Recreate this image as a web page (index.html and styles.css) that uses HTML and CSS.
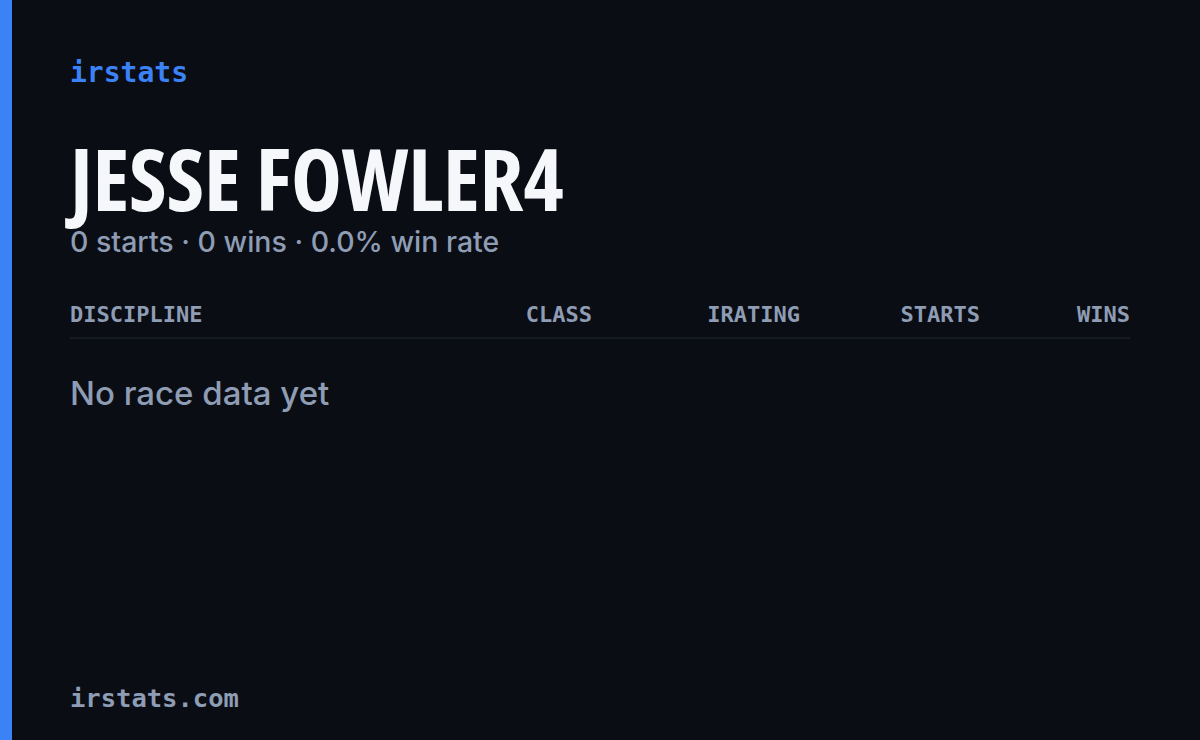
FILE: index.html
```html
<!DOCTYPE html>
<html>
<head>
<meta charset="utf-8">
<link rel="stylesheet" href="styles.css">
</head>
<body>
<div class="card">
  <div class="accent"></div>
  <main class="content">
    <div class="logo">irstats</div>
    <h1 class="name">JESSE FOWLER4</h1>
    <div class="summary">0 starts · 0 wins · 0.0% win rate</div>
    <div class="table-head">
      <span class="col col-disc">DISCIPLINE</span>
      <span class="col col-num">CLASS</span>
      <span class="col col-num">IRATING</span>
      <span class="col col-num">STARTS</span>
      <span class="col col-num">WINS</span>
    </div>
    <div class="empty">No race data yet</div>
    <div class="footer">irstats.com</div>
  </main>
</div>
</body>
</html>
```
FILE: styles.css
```css
html, body {
  margin: 0;
  padding: 0;
  background: #0a0d14;
}
.card {
  width: 1200px;
  height: 740px;
  display: flex;
  background: #0a0d14;
  overflow: hidden;
}
.accent {
  width: 12px;
  flex: none;
  background: #3b82f6;
}
.content {
  flex: 1;
  display: flex;
  flex-direction: column;
  padding: 56px 70px 26px 58px;
}
.logo {
  font-family: "DejaVu Sans Mono", "Liberation Mono", monospace;
  font-size: 28px;
  line-height: 34px;
  color: #3b82f6;
  font-weight: bold;
}
.name {
  margin: 45px 0 0;
  font-family: "Open Sans", "Liberation Sans", sans-serif;
  font-stretch: 75%;
  font-style: normal;
  font-weight: 700;
  font-size: 86px;
  line-height: 86px;
  color: #f5f7fa;
  letter-spacing: -0.2px;
}
.summary {
  margin-top: 6px;
  font-family: Inter, "Noto Sans", sans-serif;
  font-size: 28.5px;
  font-weight: 500;
  line-height: 30px;
  color: #8e9cb4;
}
.table-head {
  margin-top: 44px;
  display: grid;
  grid-template-columns: 1fr 140px 208px 180px 150px;
  padding-bottom: 8px;
  border-bottom: 2px solid #161a24;
  font-family: "DejaVu Sans Mono", "Liberation Mono", monospace;
  font-size: 22px;
  font-weight: bold;
  line-height: 28px;
  color: #8e9cb4;
}
.col-num {
  text-align: right;
}
.empty {
  margin-top: 34px;
  font-family: Inter, "Noto Sans", sans-serif;
  font-size: 33px;
  font-weight: 500;
  line-height: 40px;
  color: #8e9cb4;
}
.footer {
  margin-top: auto;
  font-family: "DejaVu Sans Mono", "Liberation Mono", monospace;
  font-size: 25.5px;
  line-height: 32px;
  font-weight: bold;
  color: #8e9cb4;
}
```
